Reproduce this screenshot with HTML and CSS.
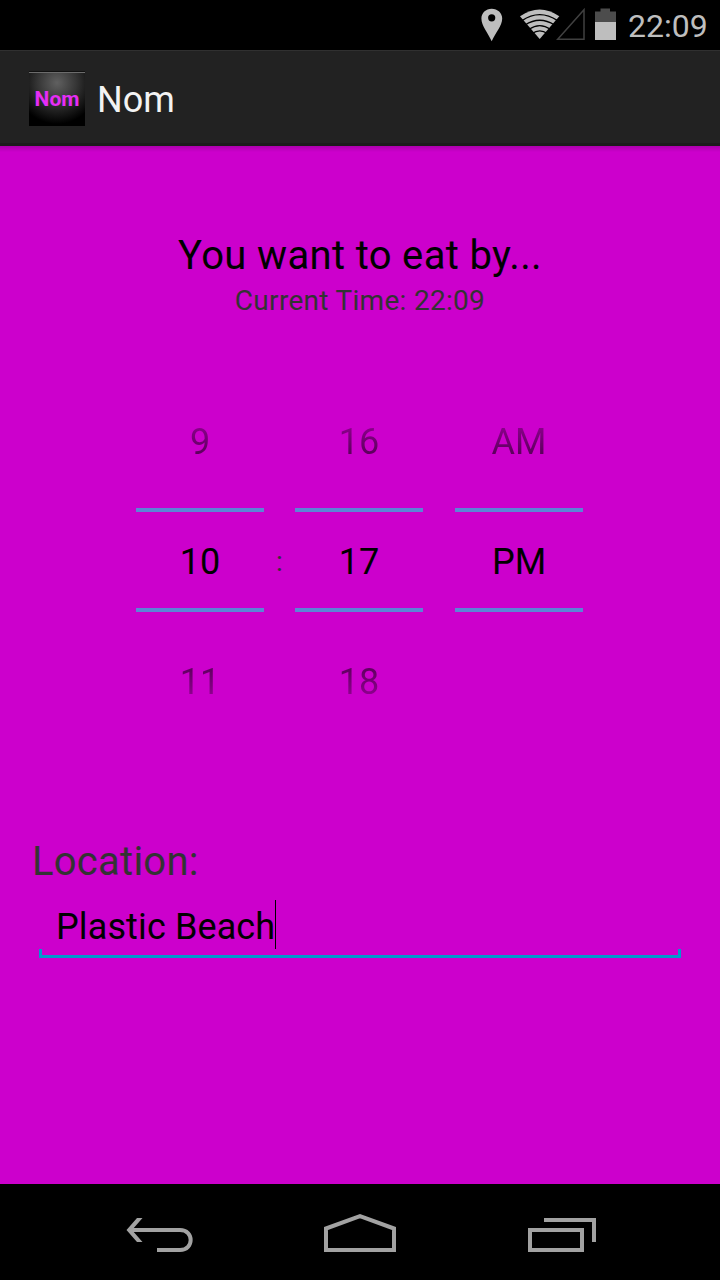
FILE: index.html
```html
<!DOCTYPE html>
<html lang="en">
<head>
<meta charset="utf-8">
<title>Nom</title>
<link rel="stylesheet" href="styles.css">
</head>
<body>
<div class="screen">
  <header class="status-bar">
    <svg class="status-icons" width="150" height="50" viewBox="0 0 150 50" aria-hidden="true">
      <path fill="#bebebe" fill-rule="evenodd" d="M21.700 8.700c-5.900 0-10.300 4.300-10.300 9.900 0 7.200 6.600 14.400 10.300 22.700 3.700-8.300 10.500-15.500 10.500-22.700 0-5.600-4.600-9.900-10.500-9.900zm0 5.500a3.600 3.600 0 1 1 0 7.200 3.600 3.600 0 0 1 0-7.200z"/>
      <path fill="#bebebe" d="M50 16.200Q69.700 2.700 89.300 16.200L69.700 39z"/>
      <g fill="none" stroke="#000" stroke-width="1.300">
        <path d="M52 20.600Q69.700 8.700 87.500 20.600"/>
        <path d="M55 25Q69.700 15.500 84.500 25"/>
        <path d="M59 29.300Q69.700 21.900 80.500 29.300"/>
        <path d="M62 33.500Q69.700 28.200 77.500 33.500"/>
      </g>
      <path fill="none" stroke="#404040" stroke-width="1.500" d="M87.700 39.200H114V9.700z"/>
      <path fill="#4c4c4c" d="M125 11.500h5.500V8.500h9.500v3h6V22h-21z"/>
      <path fill="#bebebe" d="M125 22h21v18h-21z"/>
    </svg>
    <span class="clock">22:09</span>
  </header>

  <div class="action-bar">
    <div class="app-icon">Nom</div>
    <div class="app-title">Nom</div>
  </div>

  <main class="content">
    <h1 class="heading">You want to eat by...</h1>
    <p class="current-time">Current Time: 22:09</p>

    <div class="time-picker">
      <div class="wheel">
        <div class="previous">9</div>
        <div class="selected">10</div>
        <div class="next">11</div>
      </div>
      <div class="divider">:</div>
      <div class="wheel">
        <div class="previous">16</div>
        <div class="selected">17</div>
        <div class="next">18</div>
      </div>
      <div class="wheel period">
        <div class="previous">AM</div>
        <div class="selected">PM</div>
        <div class="next"></div>
      </div>
    </div>

    <div class="location-label">Location:</div>
    <div class="text-field">
      <span class="field-value">Plastic Beach</span><span class="caret"></span>
    </div>
  </main>

  <nav class="nav-bar">
    <svg width="720" height="96" viewBox="0 0 720 96" fill="none" stroke="#a2a2a2" stroke-width="4" aria-hidden="true">
      <path d="M130 46h50c14.200 0 14.200 20 0 20h-23"/>
      <path fill="#a2a2a2" stroke="none" d="M126.500 46l10.500-12h5.500l-10.500 12 10.500 12h-5.500z"/>
      <path d="M326 66V44.500L360 32.200l34 12.300V66z"/>
      <path d="M530 46h52v20h-52zM544 36h50v22"/>
    </svg>
  </nav>
</div>
</body>
</html>
```

FILE: styles.css
```css
* {
  box-sizing: border-box;
}

body {
  margin: 0;
  background: #000;
  font-family: Roboto, "Noto Sans", sans-serif;
}

.screen {
  display: flex;
  flex-direction: column;
  width: 720px;
  height: 1280px;
  overflow: hidden;
}

.status-bar {
  display: flex;
  height: 50px;
  padding-left: 470px;
  background: #000;
}

.status-icons {
  flex: none;
}

.clock {
  margin-left: 8px;
  color: #bebebe;
  font-size: 32px;
  line-height: 52px;
  white-space: nowrap;
}

.action-bar {
  display: flex;
  height: 96px;
  padding: 20px 0 0 29px;
  border-top: 1px solid #303030;
  border-bottom: 3px solid #1b1b1b;
  background: #222;
}

.app-icon {
  width: 56px;
  height: 55px;
  border-top: 1px solid #111;
  background:
    linear-gradient(#6c6c6c, #6c6c6c) top / 100% 1px no-repeat,
    radial-gradient(circle at 50% 20%, #606060 0, #353535 38%, #000 80%);
  color: #e62df5;
  font-size: 21px;
  font-weight: 700;
  line-height: 54px;
  text-align: center;
}

.app-title {
  margin-left: 12px;
  color: #f3f3f3;
  font-size: 36px;
  line-height: 58px;
}

.content {
  height: 1038px;
  padding-top: 86px;
  background: linear-gradient(#ac00ac 0, #c0c 6px);
}

.heading {
  margin: 0;
  color: #000;
  font-size: 40px;
  font-weight: 400;
  letter-spacing: 0.35px;
  line-height: 48px;
  text-align: center;
}

.current-time {
  margin: 4px 0 0;
  color: #333;
  font-size: 28px;
  letter-spacing: 0.3px;
  line-height: 34px;
  text-align: center;
}

.time-picker {
  display: flex;
  height: 360px;
  margin-top: 64px;
  padding-left: 136px;
  font-size: 36px;
  text-align: center;
}

.wheel {
  width: 128px;
}

.previous {
  height: 126px;
  line-height: 120px;
  -webkit-mask-image: linear-gradient(transparent 8px, #000 124px);
  mask-image: linear-gradient(transparent 8px, #000 124px);
}

.selected {
  height: 104px;
  padding-top: 4px;
  border-top: 4px solid #5c85d6;
  border-bottom: 4px solid #5c85d6;
  line-height: 92px;
}

.next {
  height: 130px;
  padding-top: 10px;
  line-height: 120px;
  -webkit-mask-image: linear-gradient(#000 2px, transparent 118px);
  mask-image: linear-gradient(#000 2px, transparent 118px);
}

.divider {
  width: 31px;
  color: #333;
  font-size: 28px;
  line-height: 359px;
}

.period {
  margin-left: 32px;
}

.location-label {
  margin: 96px 0 0 32px;
  color: #333;
  font-size: 40px;
  letter-spacing: 0.25px;
  line-height: 48px;
}

.text-field {
  display: flex;
  height: 58px;
  margin: 14px 39px 0;
  padding-left: 17px;
  background:
    linear-gradient(#0099cc, #0099cc) left bottom / 3px 9px no-repeat,
    linear-gradient(#0099cc, #0099cc) right bottom / 3px 9px no-repeat,
    linear-gradient(#0099cc, #0099cc) left bottom / 100% 3px no-repeat;
  color: #000;
  font-size: 36px;
  letter-spacing: 0.12px;
  line-height: 54px;
}

.caret {
  width: 1px;
  height: 49px;
  background: #000;
}

.nav-bar {
  height: 96px;
  background: #000;
}
```
